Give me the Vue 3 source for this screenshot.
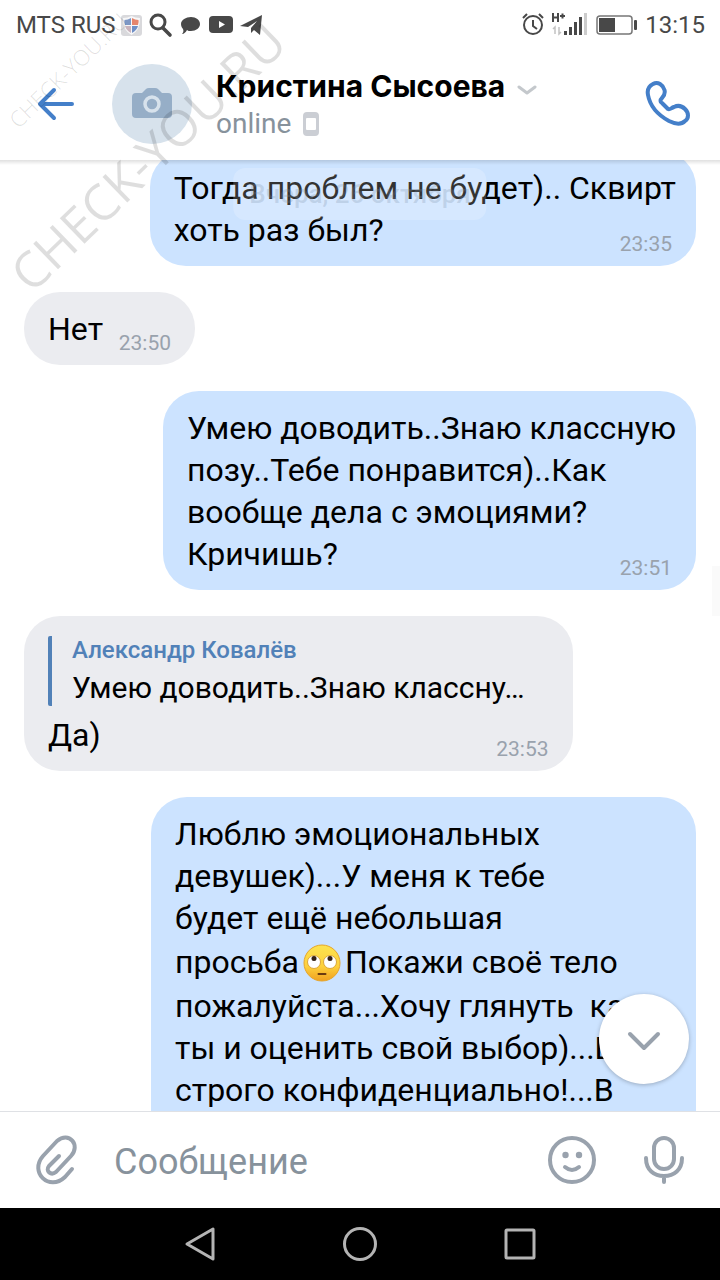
<script setup>
const messages = [
  { id: 1, out: true, text: 'Тогда проблем не будет).. Сквирт\nхоть раз был?', time: '23:35' },
  { id: 2, out: false, short: true, text: 'Нет', time: '23:50' },
  { id: 3, out: true, text: 'Умею доводить..Знаю классную\nпозу..Тебе понравится)..Как\nвообще дела с эмоциями?\nКричишь?', time: '23:51' },
  { id: 4, out: false, quote: { name: 'Александр Ковалёв', text: 'Умею доводить..Знаю классну…' }, text: 'Да)', time: '23:53' },
  {
    id: 5,
    out: true,
    wide: true,
    text: 'Люблю эмоциональных\nдевушек)...У меня к тебе\nбудет ещё небольшая\nпросьба',
    emoji: true,
    rest: 'Покажи своё тело\nпожалуйста...Хочу глянуть  как\nты и оценить свой выбор)...Всё\nстрого конфиденциально!...В',
  },
]
</script>

<template>
  <div class="screen">
    <div class="status">
      <span class="carrier">MTS RUS</span>
      <svg class="s-icons" width="146" height="26" viewBox="0 0 146 26" aria-hidden="true">
        <rect x="1" y="3" width="21" height="21" rx="3" fill="#d9d9dc" />
        <path d="M3 6 Q8 6 11.500 4 Q15 6 20 6 Q20 19 11.500 23 Q3 19 3 6Z" fill="#f7f7f8" />
        <path d="M11 6 V13 H5 Q4 10 4.500 8 Q8 8 11 6Z" fill="#7d97c4" />
        <path d="M12 6 Q15 8 18.500 8 Q19 10 18 13 H12Z" fill="#e5856c" />
        <path d="M5 14 H11 V21 Q6 18 5 14Z" fill="#c9b4bd" />
        <path d="M12 14 H18 Q17 18 12 21Z" fill="#6f8fc6" />
        <circle cx="38" cy="10" r="7" fill="none" stroke="#484848" stroke-width="3" />
        <path d="M43 16 L50 23" stroke="#484848" stroke-width="3.600" stroke-linecap="round" />
        <path d="M71 5c5 0 9 3 9 7s-4 7-9 7c-2 0-3 0-4-1c-1 2-3 4-5 4c1-1 2-3 1-5c-1-1-2-3-2-5c0-4 5-7 10-7Z" fill="#484848" />
        <rect x="89" y="4" width="24" height="17" rx="4" fill="#484848" />
        <path d="M99 9 L105 12.500 L99 16Z" fill="#fff" />
        <path d="M120 14 L142 3 L140 23 L134 18 L131 21 L131 16 L137 9 L128 15Z" fill="#484848" />
      </svg>
      <svg class="s-right" width="116" height="26" viewBox="0 0 116 26" aria-hidden="true">
        <g fill="none" stroke="#484848" stroke-width="2">
          <circle cx="12" cy="13" r="9" />
          <path d="M12 8v6l4 3M2 6l4-4M18 2l4 4" />
        </g>
        <path d="M32 1v9M37 1v9M32 5.500h5M39 4h5M41.500 1.500v5" fill="none" stroke="#484848" stroke-width="2" />
        <path d="M34 22v-7l-2 2M38 15v7l2-2" fill="none" stroke="#c2c2c2" stroke-width="1.500" />
        <path d="M44.500 19v4M49.500 15v8M54.500 10v13M59.500 5v18" stroke="#484848" stroke-width="3" />
        <path d="M64.500 1v22" stroke="#cccccc" stroke-width="3" />
        <rect x="76" y="4" width="35" height="18" rx="3" fill="#fff" stroke="#777" stroke-width="1.500" />
        <rect x="78" y="6" width="16" height="14" fill="#484848" />
        <rect x="113" y="8" width="3" height="10" rx="1" fill="#484848" />
      </svg>
      <span class="clock">13:15</span>
    </div>

    <header class="header">
      <button class="icon back" aria-label="Назад">
        <svg width="40" height="36" viewBox="0 0 40 36"><path d="M18 4 L4 18 L18 32 M4 18 H36" fill="none" stroke="#447fc9" stroke-width="4" stroke-linecap="round" stroke-linejoin="round" /></svg>
      </button>
      <div class="avatar">
        <svg width="40" height="32" viewBox="0 0 40 32" aria-hidden="true">
          <path d="M4 5h6l4-4q1-1 3-1h6q2 0 3 1l4 4h6q4 0 4 4v17q0 4-4 4H4q-4 0-4-4V9q0-4 4-4Z" fill="#96aec7" />
          <circle cx="20" cy="16" r="7" fill="none" stroke="#d7e2ec" stroke-width="3.500" />
        </svg>
      </div>
      <div class="who">
        <button class="name-row">
          <span class="name">Кристина Сысоева</span>
          <svg width="20" height="12" viewBox="0 0 20 12" aria-hidden="true"><path d="M2 3 L10 9 L18 3" fill="none" stroke="#c4c8cc" stroke-width="3" stroke-linecap="round" stroke-linejoin="round" /></svg>
        </button>
        <div class="online">
          <span>online</span>
          <svg width="16" height="24" viewBox="0 0 16 24" aria-hidden="true"><path fill-rule="evenodd" d="M4 0h8q4 0 4 4v16q0 4-4 4H4q-4 0-4-4V4q0-4 4-4ZM4 6q-1 0-1 1v10q0 1 1 1h8q1 0 1-1V7q0-1-1-1Z" fill="#cbced4" /></svg>
        </div>
      </div>
      <button class="icon call" aria-label="Позвонить">
        <svg width="48" height="48" viewBox="0 0 48 48"><path d="M9 4 C14 1 19 5 20.500 10 C21.500 14 20 16 18 18 C16 20 16 22 18 23 L24 29 C26 30 27 28 30 27 C34 25 38 26 41 29 C45 33 45 38 41 41 C37 45 31 44 25 41 C14 35 6 26 4 15 C3 10 5 6 9 4Z" fill="none" stroke="#447fc9" stroke-width="4" stroke-linejoin="round" /></svg>
      </button>
    </header>

    <main class="chat">
      <div class="list">
        <article v-for="m in messages" :key="m.id" class="bubble" :class="{ out: m.out, short: m.short, wide: m.wide }">
          <blockquote v-if="m.quote" class="quote">
            <strong>{{ m.quote.name }}</strong>
            <span>{{ m.quote.text }}</span>
          </blockquote>
          <p class="text">{{ m.text }}<svg v-if="m.emoji" class="emoji" width="38" height="38" viewBox="0 0 38 38" role="img" aria-label="🙄"><defs><linearGradient id="face" x1="0" y1="0" x2="0" y2="1"><stop offset="0" stop-color="#fde34f" /><stop offset="0.600" stop-color="#fdd03c" /><stop offset="1" stop-color="#f0a020" /></linearGradient></defs><circle cx="19" cy="19" r="18" fill="url(#face)" stroke="#e6a62c" /><circle cx="11" cy="18" r="6.500" fill="#fff" stroke="#dba63a" /><circle cx="27" cy="18" r="6.500" fill="#fff" stroke="#dba63a" /><circle cx="11" cy="14.500" r="2.500" fill="#332015" /><circle cx="27" cy="14.500" r="2.500" fill="#332015" /><path d="M15.500 30h7" stroke="#6b3a10" stroke-width="2" stroke-linecap="round" /></svg>{{ m.rest }}</p>
          <time v-if="m.time" class="time">{{ m.time }}</time>
        </article>
      </div>
      <div class="date">Вчера, 26 октября</div>
      <button class="down" aria-label="Вниз">
        <svg width="34" height="24" viewBox="0 0 34 24"><path d="M3 7 L17 21 L31 7" fill="none" stroke="#99a2ad" stroke-width="4" stroke-linecap="round" stroke-linejoin="round" /></svg>
      </button>
      <div class="edge"></div>
    </main>

    <form class="composer" @submit.prevent>
      <button class="icon" type="button" aria-label="Прикрепить">
        <svg width="44" height="52" viewBox="0 0 44 52"><path d="M24 22 L14 32 C10 37 16 42 21 38 L36 22 C46 11 34 -3 22 7 L8 22 C-6 38 14 58 30 43 L37 35" fill="none" stroke="#99a2ad" stroke-width="4" stroke-linecap="round" stroke-linejoin="round" /></svg>
      </button>
      <input class="field" type="text" placeholder="Сообщение" aria-label="Сообщение" />
      <button class="icon" type="button" aria-label="Смайлы">
        <svg width="48" height="48" viewBox="0 0 48 48"><circle cx="24" cy="24" r="22" fill="none" stroke="#99a2ad" stroke-width="4" /><circle cx="17.500" cy="19" r="3.200" fill="#99a2ad" /><circle cx="31" cy="19" r="3.200" fill="#99a2ad" /><path d="M17 31 Q24 37 31 31" fill="none" stroke="#99a2ad" stroke-width="4" stroke-linecap="round" /></svg>
      </button>
      <button class="icon mic" type="button" aria-label="Голосовое сообщение">
        <svg width="40" height="48" viewBox="0 0 40 48"><g fill="none" stroke="#99a2ad" stroke-width="4" stroke-linecap="round"><rect x="10" y="2" width="20" height="31" rx="10" /><path d="M2 22 C2 34 10 40 20 40 C30 40 38 34 38 22 M20 40V46" /></g></svg>
      </button>
    </form>

    <nav class="nav">
      <button aria-label="Назад"><svg width="36" height="36" viewBox="0 0 36 36"><path d="M31 3 V33 L5 18Z" /></svg></button>
      <button aria-label="Домой"><svg width="36" height="36" viewBox="0 0 36 36"><circle cx="18" cy="18" r="15.500" /></svg></button>
      <button aria-label="Обзор"><svg width="36" height="36" viewBox="0 0 36 36"><rect x="4" y="4" width="28" height="28" rx="1" /></svg></button>
    </nav>

    <div class="mark small">CHECK-YOU.RU</div>
    <div class="mark large">CHECK-YOU.RU</div>
  </div>
</template>

<style>
html,
body {
  margin: 0;
  background: #fff;
}
</style>

<style scoped>
.screen {
  position: relative;
  display: flex;
  flex-direction: column;
  height: 100vh;
  overflow: hidden;
  background: #fff;
  color: #000;
  font-family: Roboto, "Liberation Sans", sans-serif;
}
button {
  display: flex;
  align-items: center;
  justify-content: center;
  padding: 0;
  border: 0;
  background: none;
  color: inherit;
  font: inherit;
}
svg {
  display: block;
  flex: none;
}
.status {
  display: flex;
  align-items: center;
  flex: none;
  height: 48px;
  padding: 2px 15px 0 16px;
  box-sizing: border-box;
  font-size: 24px;
  color: #484848;
}
.s-icons {
  margin-left: 4px;
}
.s-right {
  margin-left: auto;
}
.clock {
  margin-left: 8px;
}
.header {
  position: relative;
  z-index: 2;
  display: flex;
  align-items: center;
  flex: none;
  height: 112px;
  padding: 0 28px 0 36px;
  box-sizing: border-box;
}
.header::after {
  content: "";
  position: absolute;
  top: 100%;
  left: 0;
  right: 0;
  height: 5px;
  background: linear-gradient(rgba(0, 0, 0, 0.12), rgba(0, 0, 0, 0));
}
.avatar {
  display: flex;
  align-items: center;
  justify-content: center;
  flex: none;
  width: 80px;
  height: 80px;
  margin: 0 24px 0 36px;
  border-radius: 50%;
  background: #d7e2ec;
}
.who {
  display: flex;
  flex-direction: column;
  align-items: flex-start;
  flex: 1;
}
.name-row {
  gap: 12px;
}
.name-row svg {
  margin-top: 8px;
}
.name {
  font-family: Inter, Roboto, sans-serif;
  font-size: 30px;
  line-height: 40px;
  font-weight: 700;
  white-space: nowrap;
}
.online {
  display: flex;
  align-items: center;
  gap: 12px;
  font-size: 28px;
  line-height: 36px;
  color: #87929c;
}
.chat {
  position: relative;
  flex: 1;
  min-height: 0;
  overflow: hidden;
}
.list {
  display: flex;
  flex-direction: column;
  align-items: flex-start;
  gap: 26px;
  margin-top: -9px;
  padding: 0 24px;
}
.bubble {
  position: relative;
  padding: 16px 24px 15px;
  border-radius: 36px;
  background: #ebecf0;
}
.out {
  align-self: flex-end;
  padding-right: 20px;
  background: #cce3ff;
}
.wide {
  box-sizing: border-box;
  width: 545px;
  padding-bottom: 60px;
}
.short {
  padding-right: 92px;
}
.text {
  margin: 0;
  font-size: 32px;
  line-height: 42px;
  white-space: pre-wrap;
}
.emoji {
  display: inline-block;
  margin: 5px 4px 3px;
  vertical-align: -12px;
}
.time {
  position: absolute;
  right: 24px;
  bottom: 8px;
  font-size: 21px;
  line-height: 28px;
  color: #99a2ad;
}
.quote {
  display: flex;
  flex-direction: column;
  gap: 6px;
  margin: 4px 0 8px;
  padding: 0 24px 0 20px;
  border-left: 4px solid #5181b8;
  border-radius: 2px;
  font-size: 30px;
  line-height: 36px;
}
.quote strong {
  font-size: 24px;
  line-height: 28px;
  font-weight: 500;
  color: #5181b8;
}
.date {
  position: absolute;
  top: 8px;
  left: 50%;
  padding: 0 16px;
  transform: translateX(-50%);
  border-radius: 12px;
  background: rgba(255, 255, 255, 0.2);
  font-size: 26px;
  line-height: 52px;
  font-weight: 500;
  white-space: nowrap;
  color: rgba(120, 140, 165, 0.25);
}
.down {
  position: absolute;
  right: 31px;
  bottom: 27px;
  width: 90px;
  height: 90px;
  border-radius: 50%;
  background: #fff;
  box-shadow: 0 1px 4px rgba(0, 0, 0, 0.25);
}
.edge {
  position: absolute;
  top: 406px;
  right: 0;
  width: 8px;
  height: 50px;
  background: #fafafa;
}
.composer {
  display: flex;
  align-items: center;
  flex: none;
  height: 97px;
  padding: 0 36px 0 35px;
  box-sizing: border-box;
  border-top: 1px solid #dfe1e5;
}
.field {
  flex: 1;
  min-width: 0;
  margin: 0 16px 0 35px;
  padding: 4px 0 0;
  border: 0;
  outline: 0;
  background: none;
  font: inherit;
  font-size: 36px;
}
.field::placeholder {
  color: #87929c;
  opacity: 1;
}
.mic {
  margin-left: 48px;
}
.nav {
  display: flex;
  align-items: center;
  justify-content: center;
  gap: 124px;
  flex: none;
  height: 72px;
  background: #000;
}
.nav svg {
  fill: none;
  stroke: #b4b4b4;
  stroke-width: 3;
  stroke-linejoin: round;
}
.mark {
  position: absolute;
  z-index: 3;
  transform: rotate(-44deg);
  transform-origin: 0 100%;
  font-family: "Open Sans", sans-serif;
  line-height: 1;
  white-space: nowrap;
  color: rgba(0, 0, 0, 0.13);
  pointer-events: none;
}
.small {
  top: 109px;
  left: 20px;
  font-size: 22px;
  font-weight: 300;
}
.large {
  top: 249px;
  left: 36px;
  font-size: 50px;
}
</style>
